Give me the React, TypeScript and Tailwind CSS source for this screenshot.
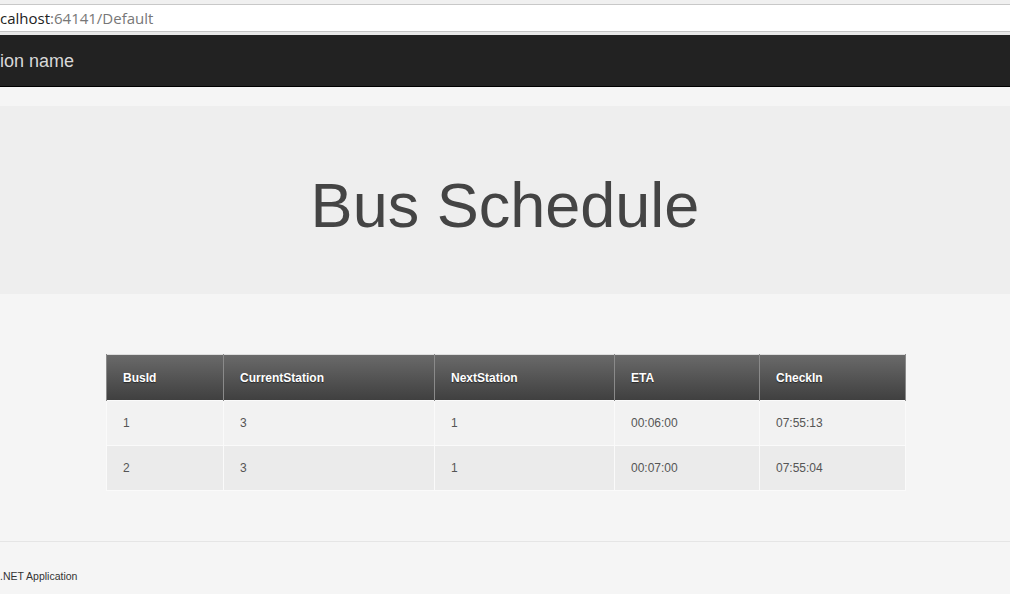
import React from 'react';

const rows = [
  { busId: '1', current: '3', next: '1', eta: '00:06:00', checkIn: '07:55:13' },
  { busId: '2', current: '3', next: '1', eta: '00:07:00', checkIn: '07:55:04' },
];

const cols = ['w-[117px]', 'w-[211px]', 'w-[180px]', 'w-[145px]', 'w-[146px]'];

export default function App() {
  return (
    <div className="w-[1010px] h-[594px] overflow-hidden bg-[#f5f5f5] font-['Liberation_Sans',Arial,sans-serif]">
      {/* browser address bar */}
      <div className="h-[5px] bg-[#f0f0f0] border-b border-[#c8c8c8]" />
      <div className="h-[26px] bg-white flex items-center text-[15px] leading-none font-['Open_Sans',sans-serif]">
        <span className="text-[#222]">calhost</span>
        <span className="text-[#777]">:64141/Default</span>
      </div>
      <div className="h-[4px] bg-[#e8e8e8] border-t border-[#c4c4c4]" />

      {/* navbar */}
      <div className="h-[52px] bg-[#222] border-b border-black flex items-center">
        <span className="text-[18px] text-[#d8d8d8] mt-[1px]">ion name</span>
      </div>

      {/* jumbotron */}
      <div className="mt-[19px] h-[188px] bg-[#eee] flex items-center justify-center">
        <h1 className="text-[63px] text-[#444] leading-none mt-[10px]">Bus Schedule</h1>
      </div>

      {/* table */}
      <div className="mt-[60px] pl-[106px]">
        <table className="border-collapse border border-[#ddd] text-[12px]">
          <thead>
            <tr className="h-[46px] bg-gradient-to-b from-[#6a6a6a] to-[#3f3f3f]">
              {['BusId', 'CurrentStation', 'NextStation', 'ETA', 'CheckIn'].map((h, i) => (
                <th
                  key={h}
                  className={`${cols[i]} text-left font-bold text-white pl-4 border-x border-[#8a8a8a] [text-shadow:0_1px_1px_rgba(0,0,0,0.5)]`}
                >
                  {h}
                </th>
              ))}
            </tr>
          </thead>
          <tbody>
            {rows.map((r, ri) => (
              <tr key={r.busId} className={`h-[45px] text-[#555] ${ri === 0 ? 'bg-[#f2f2f2]' : 'bg-[#ebebeb]'}`}>
                {[r.busId, r.current, r.next, r.eta, r.checkIn].map((v, i) => (
                  <td key={i} className="pl-4 border border-[#fafafa]">
                    {v}
                  </td>
                ))}
              </tr>
            ))}
          </tbody>
        </table>
      </div>

      {/* footer */}
      <div className="mt-[50px] border-t border-[#e5e5e5]" />
      <div className="mt-[27px] text-[10.5px] text-[#333]">.NET Application</div>
    </div>
  );
}
